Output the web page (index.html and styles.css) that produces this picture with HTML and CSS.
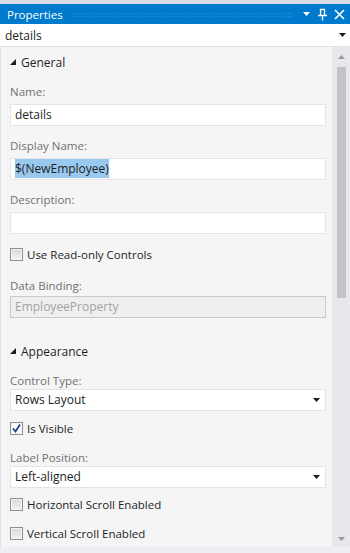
FILE: index.html
```html
<!DOCTYPE html>
<html lang="en">
<head>
    <meta charset="UTF-8">
    <title>Properties</title>
    <link rel="stylesheet" href="styles.css">
</head>
<body>
<div class="panel">
    <div class="titlebar">
        <span class="title">Properties</span>
        <span class="grip"></span>
        <span class="tb-icons">
            <svg width="9" height="6" viewBox="0 0 9 6"><polygon points="1,1 8,1 4.5,5" fill="#fff"/></svg>
            <svg width="11" height="13" viewBox="0 0 11 13"><path d="M3.5 1.5h4v6h-4z M1 7.5h9 M5.5 7.5v5" stroke="#fff" stroke-width="1.3" fill="none"/></svg>
            <svg width="11" height="11" viewBox="0 0 11 11"><path d="M1 1L10 10M10 1L1 10" stroke="#fff" stroke-width="1.6"/></svg>
        </span>
    </div>

    <div class="objcombo">
        <span>details</span>
        <svg class="drop" width="9" height="6" viewBox="0 0 9 6"><polygon points="1,1 8,1 4.5,5" fill="#1e1e1e"/></svg>
    </div>

    <div class="main">
        <div class="grid">
            <div class="section">
                <svg width="6" height="6" viewBox="0 0 6 6"><polygon points="6,0 6,6 0,6" fill="#1e1e1e"/></svg>
                General
            </div>

            <div class="label">Name:</div>
            <div class="field">details</div>

            <div class="label">Display Name:</div>
            <div class="field"><span class="selected">$(NewEmployee)</span></div>

            <div class="label">Description:</div>
            <div class="field"></div>

            <div class="check"><span class="box"></span>Use Read-only Controls</div>

            <div class="label wide">Data Binding:</div>
            <div class="field disabled snug">EmployeeProperty</div>

            <div class="section gap">
                <svg width="6" height="6" viewBox="0 0 6 6"><polygon points="6,0 6,6 0,6" fill="#1e1e1e"/></svg>
                Appearance
            </div>

            <div class="label">Control Type:</div>
            <div class="field select flush">Rows Layout
                <svg width="9" height="6" viewBox="0 0 9 6"><polygon points="1,1 8,1 4.5,5" fill="#1e1e1e"/></svg>
            </div>

            <div class="check visible"><span class="box checked">
                <svg width="11" height="11" viewBox="0 0 11 11"><path d="M2 5.5L4.5 8.5L9 1.5" stroke="#1f3f8f" stroke-width="1.8" fill="none"/></svg>
            </span>Is Visible</div>

            <div class="label mid">Label Position:</div>
            <div class="field select flush">Left-aligned
                <svg width="9" height="6" viewBox="0 0 9 6"><polygon points="1,1 8,1 4.5,5" fill="#1e1e1e"/></svg>
            </div>

            <div class="check near"><span class="box"></span>Horizontal Scroll Enabled</div>
            <div class="check far"><span class="box"></span>Vertical Scroll Enabled</div>
        </div>

        <div class="vscroll">
            <svg width="9" height="6" viewBox="0 0 9 6"><polygon points="1,5 8,5 4.5,1" fill="#9a9aa6"/></svg>
            <div class="track"><div class="thumb"></div></div>
            <svg width="9" height="6" viewBox="0 0 9 6"><polygon points="1,1 8,1 4.5,5" fill="#9a9aa6"/></svg>
        </div>
    </div>

    <div class="foot"></div>
</div>
</body>
</html>
```

FILE: styles.css
```css
html, body {
    margin: 0;
    height: 100%;
}

body {
    font-family: "Open Sans", "Noto Sans", sans-serif;
    font-size: 11.5px;
    color: #1e1e1e;
    background: #f5f5f5;
}

.panel {
    width: 350px;
    height: 553px;
    display: flex;
    flex-direction: column;
    border-top: 4px solid #d9dbe3;
    box-sizing: border-box;
}

.titlebar {
    height: 20px;
    background: #007acc;
    color: #fff;
    display: flex;
    align-items: center;
    padding-left: 7px;
}

.title {
    font-size: 11.5px;
}

.grip {
    flex: 1;
    height: 5px;
    margin: 0 8px 0 8px;
    background-image: radial-gradient(circle, #3b97d8 0.7px, transparent 1px);
    background-size: 3px 3px;
}

.tb-icons {
    display: flex;
    align-items: center;
    gap: 6px;
    padding-right: 5px;
}

.objcombo {
    height: 23px;
    background: #fff;
    border-bottom: 1px solid #e1e1e6;
    box-sizing: border-box;
    display: flex;
    align-items: center;
    justify-content: space-between;
    padding: 0 3px 0 5px;
    font-size: 12px;
}

.main {
    flex: 1;
    display: flex;
    min-height: 0;
}

.grid {
    flex: 1;
    padding: 0 6px 0 9px;
    border-left: 1px solid #dfe0e6;
}

.section {
    height: 30px;
    display: flex;
    align-items: center;
    gap: 5px;
    font-size: 12px;
}

.section.gap {
    margin-top: 18px;
}

.label {
    height: 16px;
    line-height: 16px;
    margin-top: 12px;
    color: #717171;
}

.section + .label {
    margin-top: 7px;
}

.label.wide {
    margin-top: 16px;
}

.label.mid {
    margin-top: 14px;
}

.field {
    height: 22px;
    line-height: 20px;
    margin-top: 4px;
    padding-left: 4px;
    border: 1px solid #e4e4e8;
    background: #fff;
    box-sizing: border-box;
    font-size: 12px;
}

.field.snug {
    margin-top: 2px;
}

.field.flush {
    margin-top: 0;
}

.field.disabled {
    background: #efeff1;
    border-color: #c9c9cc;
    color: #a2a2a2;
}

.field.select {
    display: flex;
    align-items: center;
    justify-content: space-between;
    padding-right: 4px;
}

.selected {
    background: #99c9ef;
    padding: 1px 0;
}

.check {
    height: 16px;
    margin-top: 12px;
    display: flex;
    align-items: center;
    gap: 4px;
    color: #1e1e1e;
    font-size: 11.5px;
}

.check.visible {
    margin-top: 9px;
}

.check.near {
    margin-top: 8px;
}

.check.far {
    margin-top: 13px;
}

.box {
    width: 13px;
    height: 13px;
    box-sizing: border-box;
    border: 1px solid #8e8f8f;
    background: linear-gradient(#d8d8da, #f4f4f5);
    box-shadow: inset 0 0 0 1px #f4f4f4;
    display: flex;
    align-items: center;
    justify-content: center;
}

.box.checked {
    background: #fff;
}

.vscroll {
    width: 18px;
    background: #e8e8ec;
    display: flex;
    flex-direction: column;
    align-items: center;
    padding: 7px 0 5px;
    box-sizing: border-box;
}

.track {
    flex: 1;
    width: 100%;
    padding-top: 7px;
    display: flex;
    justify-content: center;
}

.thumb {
    width: 9px;
    height: 231px;
    background: #c2c3c9;
}

.foot {
    height: 6px;
    background: #eeeef2;
}
```
